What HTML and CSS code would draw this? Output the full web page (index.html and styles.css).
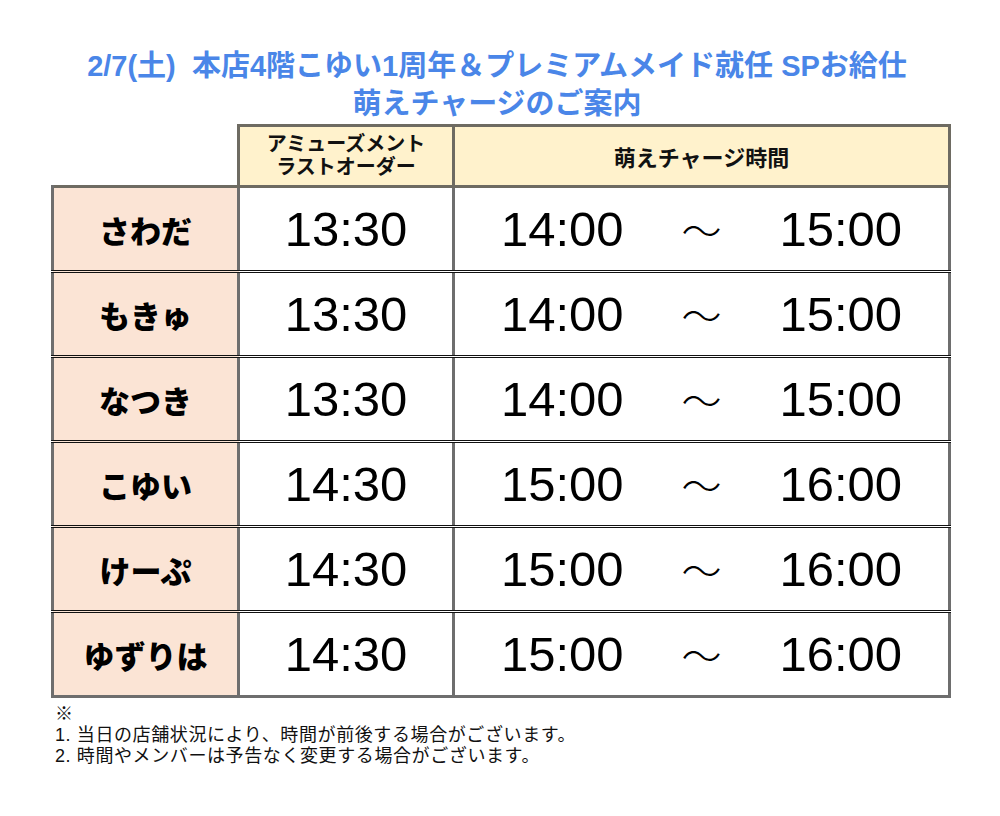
FILE: index.html
```html
<!DOCTYPE html>
<html lang="ja">
<head>
<meta charset="utf-8">
<title>萌えチャージのご案内</title>
<link rel="stylesheet" href="styles.css">
</head>
<body>
<div class="page">
  <h1 class="title">
    <span class="line">2/7(土)&nbsp; 本店4階こゆい1周年＆プレミアムメイド就任 SPお給仕</span>
    <span class="line">萌えチャージのご案内</span>
  </h1>
  <table class="schedule">
    <colgroup>
      <col class="c-name">
      <col class="c-last">
      <col class="c-time">
    </colgroup>
    <thead>
      <tr>
        <th class="blank"></th>
        <th class="head small">アミューズメント<br>ラストオーダー</th>
        <th class="head big">萌えチャージ時間</th>
      </tr>
    </thead>
    <tbody>
      <tr>
        <td class="name">さわだ</td>
        <td class="time">13:30</td>
        <td class="range"><div class="span"><span>14:00</span><span class="tilde">～</span><span>15:00</span></div></td>
      </tr>
      <tr>
        <td class="name">もきゅ</td>
        <td class="time">13:30</td>
        <td class="range"><div class="span"><span>14:00</span><span class="tilde">～</span><span>15:00</span></div></td>
      </tr>
      <tr>
        <td class="name">なつき</td>
        <td class="time">13:30</td>
        <td class="range"><div class="span"><span>14:00</span><span class="tilde">～</span><span>15:00</span></div></td>
      </tr>
      <tr>
        <td class="name">こゆい</td>
        <td class="time">14:30</td>
        <td class="range"><div class="span"><span>15:00</span><span class="tilde">～</span><span>16:00</span></div></td>
      </tr>
      <tr>
        <td class="name">けーぷ</td>
        <td class="time">14:30</td>
        <td class="range"><div class="span"><span>15:00</span><span class="tilde">～</span><span>16:00</span></div></td>
      </tr>
      <tr>
        <td class="name">ゆずりは</td>
        <td class="time">14:30</td>
        <td class="range"><div class="span"><span>15:00</span><span class="tilde">～</span><span>16:00</span></div></td>
      </tr>
    </tbody>
  </table>
  <div class="notes">
    <p>※</p>
    <p>1. 当日の店舗状況により、時間が前後する場合がございます。</p>
    <p>2. 時間やメンバーは予告なく変更する場合がございます。</p>
  </div>
</div>
</body>
</html>
```
FILE: styles.css
```css
html, body {
  margin: 0;
  padding: 0;
  background: #ffffff;
}
body {
  font-family: "Liberation Sans", "Noto Sans CJK JP", sans-serif;
  color: #000;
}
.page {
  width: 1000px;
  padding-top: 47px;
}
.title {
  margin: 0;
  padding-right: 6px;
  text-align: center;
  font-size: 29px;
  font-weight: 700;
  line-height: 38px;
  color: #4a86e8;
}
.title .line {
  display: block;
}
.schedule {
  margin: 1px 0 0 51px;
  width: 897px;
  border-collapse: collapse;
  table-layout: fixed;
}
.c-name { width: 186px; }
.c-last { width: 215px; }
.c-time { width: 496px; }
.schedule th, .schedule td {
  padding: 0;
  text-align: center;
  vertical-align: middle;
}
.blank {
  border: none;
  background: #fff;
}
.head {
  height: 58px;
  background: #fff2cc;
  border: 3px solid #6e6b62;
  font-weight: 700;
  color: #111;
}
.head.small {
  font-size: 20px;
  line-height: 23px;
}
.head.big {
  font-size: 22px;
}
.schedule td {
  height: 82px;
  border-left: 3px solid #6e6e6e;
  border-right: 3px solid #6e6e6e;
  border-top: 3px double #111;
  border-bottom: 3px double #111;
}
.schedule tbody tr:first-child td {
  border-top: 3px solid #6e6b62;
}
.schedule tbody tr:last-child td {
  border-bottom: 3px solid #6e6e6e;
}
.name {
  background: #fbe4d5;
  font-size: 31px;
  font-weight: 900;
}
.time, .range {
  font-size: 49px;
  font-weight: 400;
}
.span {
  display: flex;
  justify-content: center;
  align-items: center;
  gap: 58px;
}
.tilde {
  font-family: "Noto Sans CJK JP", sans-serif;
  font-size: 40px;
  font-weight: 300;
}
.notes {
  margin: 6px 0 0 55px;
  font-family: "Liberation Sans", "Noto Sans CJK JP", sans-serif;
  font-size: 18px;
  line-height: 21px;
  letter-spacing: 0.6px;
  color: #111;
}
.notes p {
  margin: 0;
}
```
